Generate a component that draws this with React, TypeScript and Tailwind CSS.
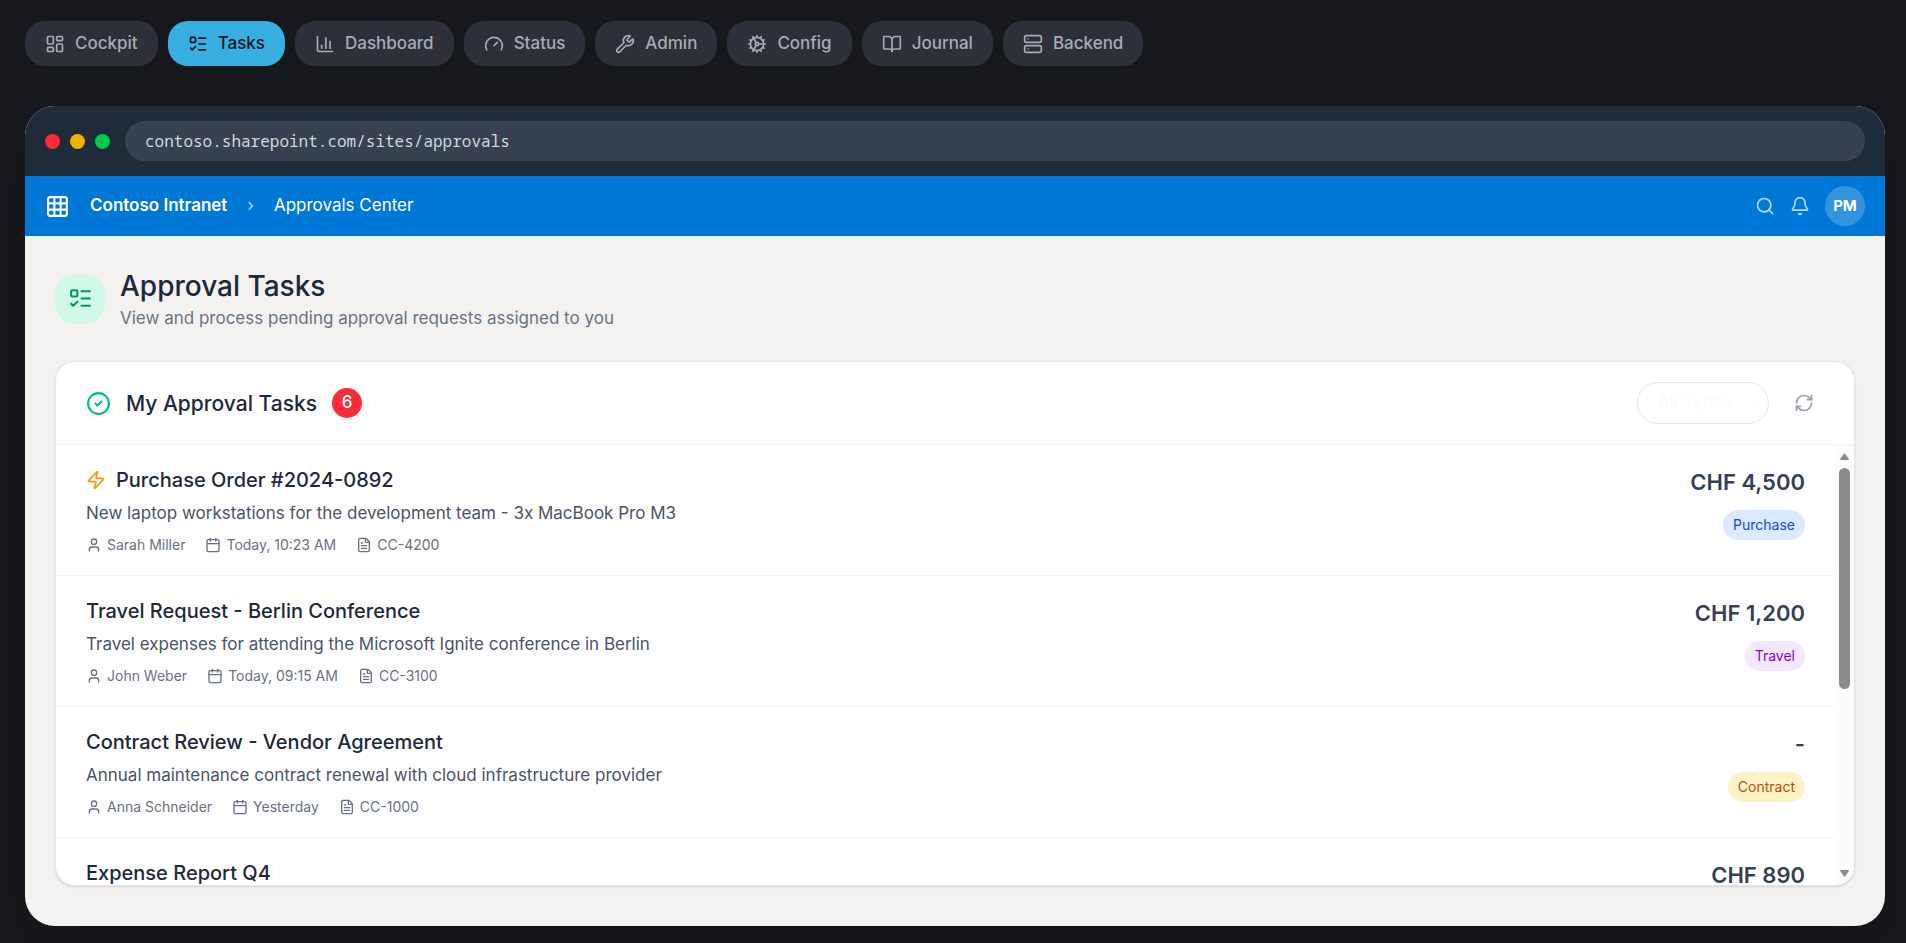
import { useState } from "react";
import {
  Bell,
  BookOpen,
  Calendar,
  ChartColumn,
  ChevronDown,
  CircleCheck,
  Cog,
  FileText,
  Gauge,
  Grid3x3,
  LayoutDashboard,
  ListTodo,
  RefreshCw,
  Search,
  Server,
  User,
  Wrench,
  Zap,
  type LucideIcon,
} from "lucide-react";
import clsx from "clsx";

interface Task {
  id: number;
  title: string;
  description: string;
  requester: string;
  date: string;
  costCenter: string;
  amount: string;
  type: string;
  urgent?: boolean;
}

const tabs: { name: string; icon: LucideIcon }[] = [
  { name: "Cockpit", icon: LayoutDashboard },
  { name: "Tasks", icon: ListTodo },
  { name: "Dashboard", icon: ChartColumn },
  { name: "Status", icon: Gauge },
  { name: "Admin", icon: Wrench },
  { name: "Config", icon: Cog },
  { name: "Journal", icon: BookOpen },
  { name: "Backend", icon: Server },
];

const tasks: Task[] = [
  {
    id: 1,
    title: "Purchase Order #2024-0892",
    description: "New laptop workstations for the development team - 3x MacBook Pro M3",
    requester: "Sarah Miller",
    date: "Today, 10:23 AM",
    costCenter: "CC-4200",
    amount: "CHF 4,500",
    type: "Purchase",
    urgent: true,
  },
  {
    id: 2,
    title: "Travel Request - Berlin Conference",
    description: "Travel expenses for attending the Microsoft Ignite conference in Berlin",
    requester: "John Weber",
    date: "Today, 09:15 AM",
    costCenter: "CC-3100",
    amount: "CHF 1,200",
    type: "Travel",
  },
  {
    id: 3,
    title: "Contract Review - Vendor Agreement",
    description: "Annual maintenance contract renewal with cloud infrastructure provider",
    requester: "Anna Schneider",
    date: "Yesterday",
    costCenter: "CC-1000",
    amount: "-",
    type: "Contract",
  },
  {
    id: 4,
    title: "Expense Report Q4",
    description: "",
    requester: "",
    date: "",
    costCenter: "",
    amount: "CHF 890",
    type: "",
  },
];

const typeStyles: Record<string, string> = {
  Purchase: "bg-blue-100 text-blue-700",
  Travel: "bg-purple-100 text-purple-700",
  Contract: "bg-amber-100 text-amber-700",
};

const Meta = ({ icon: Icon, text }: { icon: LucideIcon; text: string }) => (
  <span className="flex items-center gap-[5px]">
    <Icon className="size-4" />
    {text}
  </span>
);

const TaskRow = ({ task }: { task: Task }) => (
  <li className="flex justify-between border-b border-gray-100 px-[30px] py-5">
    <div>
      <h3 className="flex items-center gap-2.5 text-[20px] leading-[30px] font-medium text-gray-800">
        {task.urgent && <Zap className="size-5 text-amber-500" />}
        {task.title}
      </h3>
      <p className="mt-1.5 text-[17px] leading-[25px] text-gray-600">{task.description}</p>
      {task.requester && (
        <div className="mt-[9px] flex gap-5 text-[14px] leading-5 text-gray-500">
          <Meta icon={User} text={task.requester} />
          <Meta icon={Calendar} text={task.date} />
          <Meta icon={FileText} text={task.costCenter} />
        </div>
      )}
    </div>
    <div className="flex flex-col items-end gap-2.5">
      <span className="text-[22px] leading-[35px] font-semibold text-gray-700">{task.amount}</span>
      {task.type && (
        <span className={clsx("rounded-full px-2.5 text-[14px] leading-[30px]", typeStyles[task.type])}>
          {task.type}
        </span>
      )}
    </div>
  </li>
);

const App = () => {
  const [activeTab, setActiveTab] = useState("Tasks");

  return (
    <div className="flex h-screen flex-col gap-10 bg-[#17181c] pt-[21px] pr-[21px] pb-[17px] pl-[25px] font-[Inter,sans-serif]">
      <nav className="flex gap-2.5">
        {tabs.map(({ name, icon: Icon }) => (
          <button
            key={name}
            type="button"
            onClick={() => setActiveTab(name)}
            className={clsx(
              "flex items-center gap-2.5 rounded-[20px] px-5 py-2.5 text-[17px] leading-[25px] font-medium",
              activeTab === name ? "bg-[#38afe3] text-[#17181c]" : "bg-[#2d3038] text-[#a6abb5]",
            )}
          >
            <Icon className="size-5" />
            {name}
          </button>
        ))}
      </nav>

      <div className="flex min-h-0 flex-1 flex-col overflow-hidden rounded-[30px] bg-[#f3f2f1] shadow-2xl">
        <div className="flex items-center gap-2.5 bg-[#1f2a3a] px-5 py-[15px]">
          <span className="size-[15px] rounded-full bg-red-500" />
          <span className="size-[15px] rounded-full bg-yellow-500" />
          <span className="size-[15px] rounded-full bg-green-500" />
          <div className="ml-[5px] flex-1 rounded-full bg-[#374152] px-5 font-['Noto_Sans_Mono','DejaVu_Sans_Mono',monospace] text-[16px] leading-10 text-gray-300">
            contoso.sharepoint.com/sites/approvals
          </div>
        </div>

        <header className="flex items-center justify-between bg-[#0078d7] px-5 py-2.5 text-[17px] text-white">
          <div className="flex items-center gap-5">
            <Grid3x3 className="size-[25px]" />
            <span className="font-semibold">Contoso Intranet</span>
            <span className="opacity-70">›</span>
            <span>Approvals Center</span>
          </div>
          <div className="flex items-center gap-[15px]">
            <button type="button" aria-label="Search">
              <Search className="size-5 opacity-70" />
            </button>
            <button type="button" aria-label="Notifications">
              <Bell className="size-5 opacity-70" />
            </button>
            <span className="flex size-10 items-center justify-center rounded-full bg-white/20 text-[15px] font-bold">
              PM
            </span>
          </div>
        </header>

        <main className="flex min-h-0 flex-1 flex-col gap-[30px] px-[30px] pt-[30px] pb-10">
          <div className="flex items-center gap-[15px]">
            <div className="flex size-[50px] items-center justify-center rounded-[20px] bg-emerald-100 text-emerald-600">
              <ListTodo className="size-[25px]" />
            </div>
            <div>
              <h1 className="text-[28px] leading-10 font-medium text-gray-800">Approval Tasks</h1>
              <p className="text-[17px] leading-[25px] text-gray-500">
                View and process pending approval requests assigned to you
              </p>
            </div>
          </div>

          <section className="flex min-h-0 flex-col overflow-hidden rounded-[20px] border border-gray-200 bg-white shadow-sm">
            <div className="flex items-center justify-between border-b border-gray-100 px-[30px] py-5">
              <div className="flex items-center gap-[15px]">
                <CircleCheck className="size-[25px] text-emerald-500" />
                <h2 className="text-[21px] leading-[35px] font-medium text-gray-800">My Approval Tasks</h2>
                <span className="flex size-[30px] items-center justify-center rounded-full bg-red-500 text-[17px] font-medium text-white">
                  6
                </span>
              </div>
              <div className="flex items-center gap-[15px]">
                <div className="relative">
                  <select
                    aria-label="Filter by type"
                    className="h-[42px] w-[132px] appearance-none rounded-full border border-gray-200 bg-white px-5 text-[17px] text-gray-50"
                  >
                    <option>All Types</option>
                  </select>
                  <ChevronDown className="pointer-events-none absolute top-3.5 right-1 size-4 text-gray-50" />
                </div>
                <button type="button" aria-label="Refresh" className="p-2.5 text-gray-400">
                  <RefreshCw className="size-5" />
                </button>
              </div>
            </div>

            <div className="flex min-h-0">
              <ul className="min-h-0 flex-1 overflow-y-auto [scrollbar-width:none]">
                {tasks.map((task) => (
                  <TaskRow key={task.id} task={task} />
                ))}
              </ul>
              <div className="flex w-[19px] flex-col items-center gap-2 bg-[#fcfcfc] py-2 text-[#8b8b8b]">
                <svg viewBox="0 0 9 7" className="h-[7px] w-[9px]" fill="currentColor">
                  <path d="M4.5 0 9 6.2 8.4 7H.6L0 6.2z" />
                </svg>
                <div className="flex-1">
                  <div className="h-[56%] w-[11px] rounded-full bg-current" />
                </div>
                <svg viewBox="0 0 9 7" className="h-[7px] w-[9px]" fill="currentColor">
                  <path d="M4.5 7 9 .8 8.4 0H.6L0 .8z" />
                </svg>
              </div>
            </div>
          </section>
        </main>
      </div>
    </div>
  );
};

export default App;
